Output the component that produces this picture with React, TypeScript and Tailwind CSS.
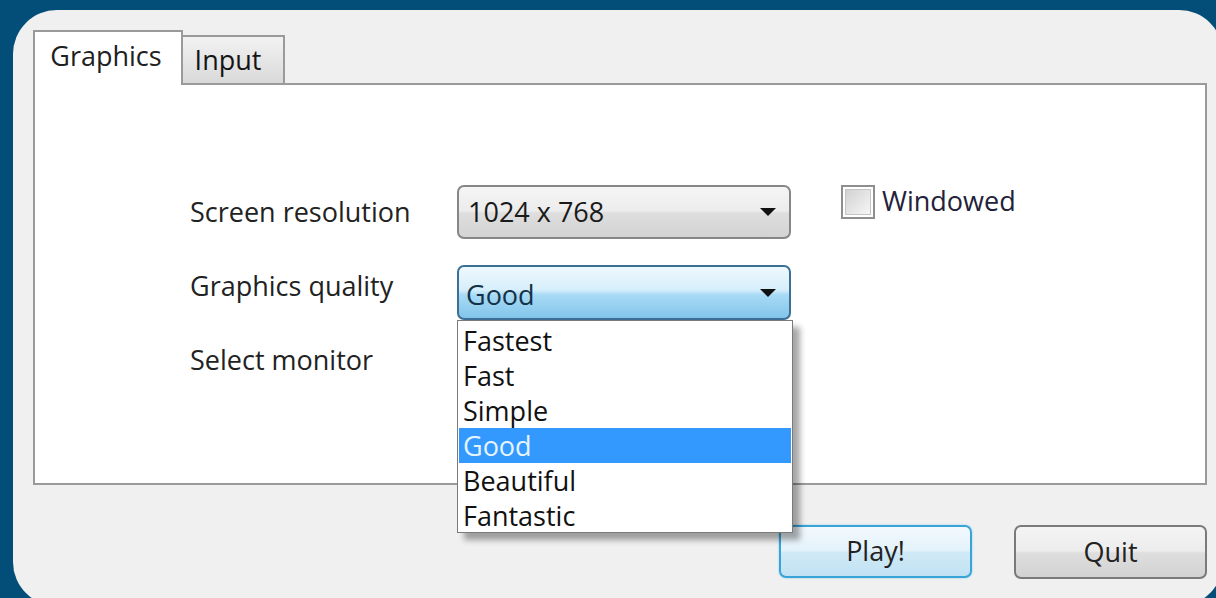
import { useState } from "react";

const qualities = ["Fastest", "Fast", "Simple", "Good", "Beautiful", "Fantastic"];

function Arrow() {
  return (
    <svg width="18" height="10" viewBox="0 0 18 10" className="shrink-0">
      <path d="M1 1 L17 1 L9 9 Z" fill="#111" />
    </svg>
  );
}

export default function App() {
  const [tab, setTab] = useState("Graphics");
  const [quality, setQuality] = useState("Good");
  const [open, setOpen] = useState(true);

  return (
    <div className="h-[598px] w-[1216px] overflow-hidden bg-[#034e78] pl-[13px] pt-[10px] font-['Open_Sans',sans-serif] text-[27px] leading-none text-[#1a1a1a]">
      <div className="h-[596px] w-[1210px] rounded-[44px] bg-[#f0f0f0] pl-[20px] pt-[20px]">
        {/* tab strip */}
        <div className="flex h-[53px] items-end">
          <button
            onClick={() => setTab("Graphics")}
            className="relative z-10 -mb-[2px] flex h-[55px] w-[150px] justify-center border-2 border-b-0 border-[#9a9a9a] bg-white pt-[10px] pr-[4px] text-[#202020]"
          >
            Graphics
          </button>
          <button
            onClick={() => setTab("Input")}
            className="flex h-[48px] w-[102px] justify-center border-2 border-b-0 border-l-0 border-[#9a9a9a] bg-[linear-gradient(#f2f2f2,#e6e6e6_50%,#d9d9d9)] pt-[9px] pr-[10px] text-[#141414]"
          >
            Input
          </button>
        </div>

        {/* tab page */}
        <div className="relative h-[402px] w-[1174px] border-2 border-[#9a9a9a] bg-white pl-[155px] pt-[100px]">
          {tab === "Graphics" && (
            <div className="flex items-start">
              <div className="flex w-[267px] flex-col gap-[44px] pt-[13px] text-[#222]">
                <div className="h-[30px]">Screen resolution</div>
                <div className="h-[30px]">Graphics quality</div>
                <div className="h-[30px]">Select monitor</div>
              </div>

              <div className="flex w-[334px] flex-col gap-[26px]">
                <div className="flex h-[54px] items-center justify-between rounded-[7px] border-2 border-[#868686] bg-[linear-gradient(#f5f5f5,#ececec_48%,#dedede_52%,#d3d3d3)] pl-[9px] pr-[12px]">
                  <span className="pb-[2px]">1024 x 768</span>
                  <Arrow />
                </div>

                <div className="relative">
                  <div
                    onClick={() => setOpen(!open)}
                    className="flex h-[55px] items-center justify-between rounded-[7px] border-2 border-[#3b6f95] bg-[linear-gradient(#eef8fd,#d6eefb_45%,#a8daf5_55%,#82c5ea)] pl-[7px] pr-[12px]"
                  >
                    <span className="pt-[4px] text-[#13324a]">{quality}</span>
                    <Arrow />
                  </div>

                  {open && (
                    <div className="absolute left-0 top-full z-20 h-[213px] w-[336px] border border-[#7a7a7a] bg-white px-[1px] pt-[2px] shadow-[7px_7px_6px_rgba(0,0,0,0.35)]">
                      {qualities.map((q) => (
                        <div
                          key={q}
                          onClick={() => {
                            setQuality(q);
                            setOpen(false);
                          }}
                          className={`flex h-[35px] items-center pl-[4px] ${q === quality ? "bg-[#3399ff] text-[#e6f4ff]" : "text-[#111]"}`}
                        >
                          {q}
                        </div>
                      ))}
                    </div>
                  )}
                </div>
              </div>

              <label className="ml-[50px] flex items-center gap-[7px]">
                <span className="flex h-[34px] w-[34px] items-center justify-center border-2 border-[#8e8e8e] bg-white p-[2px]">
                  <span className="h-full w-full border border-[#c4c4c4] bg-[linear-gradient(135deg,#d2d2d2,#f6f6f6)]" />
                </span>
                <span className="pb-[4px] text-[#22223a]">Windowed</span>
              </label>
            </div>
          )}
        </div>

        {/* dialog buttons */}
        <div className="mt-[40px] flex w-[1174px] justify-end gap-[42px]">
          <button className="flex h-[53px] w-[193px] items-center justify-center rounded-[7px] border-2 border-[#38a4d8] bg-[linear-gradient(#f2f9fd,#e3f2fa_48%,#d0e9f6_52%,#c1e2f3)] pb-[2px] text-[#222] shadow-[0_0_2px_#7fcbef]">
            Play!
          </button>
          <button className="flex h-[54px] w-[193px] items-center justify-center rounded-[7px] border-2 border-[#7a7a7a] bg-[linear-gradient(#f4f4f4,#ececec_48%,#dedede_52%,#d2d2d2)] pb-[2px] text-[#222]">
            Quit
          </button>
        </div>
      </div>
    </div>
  );
}
